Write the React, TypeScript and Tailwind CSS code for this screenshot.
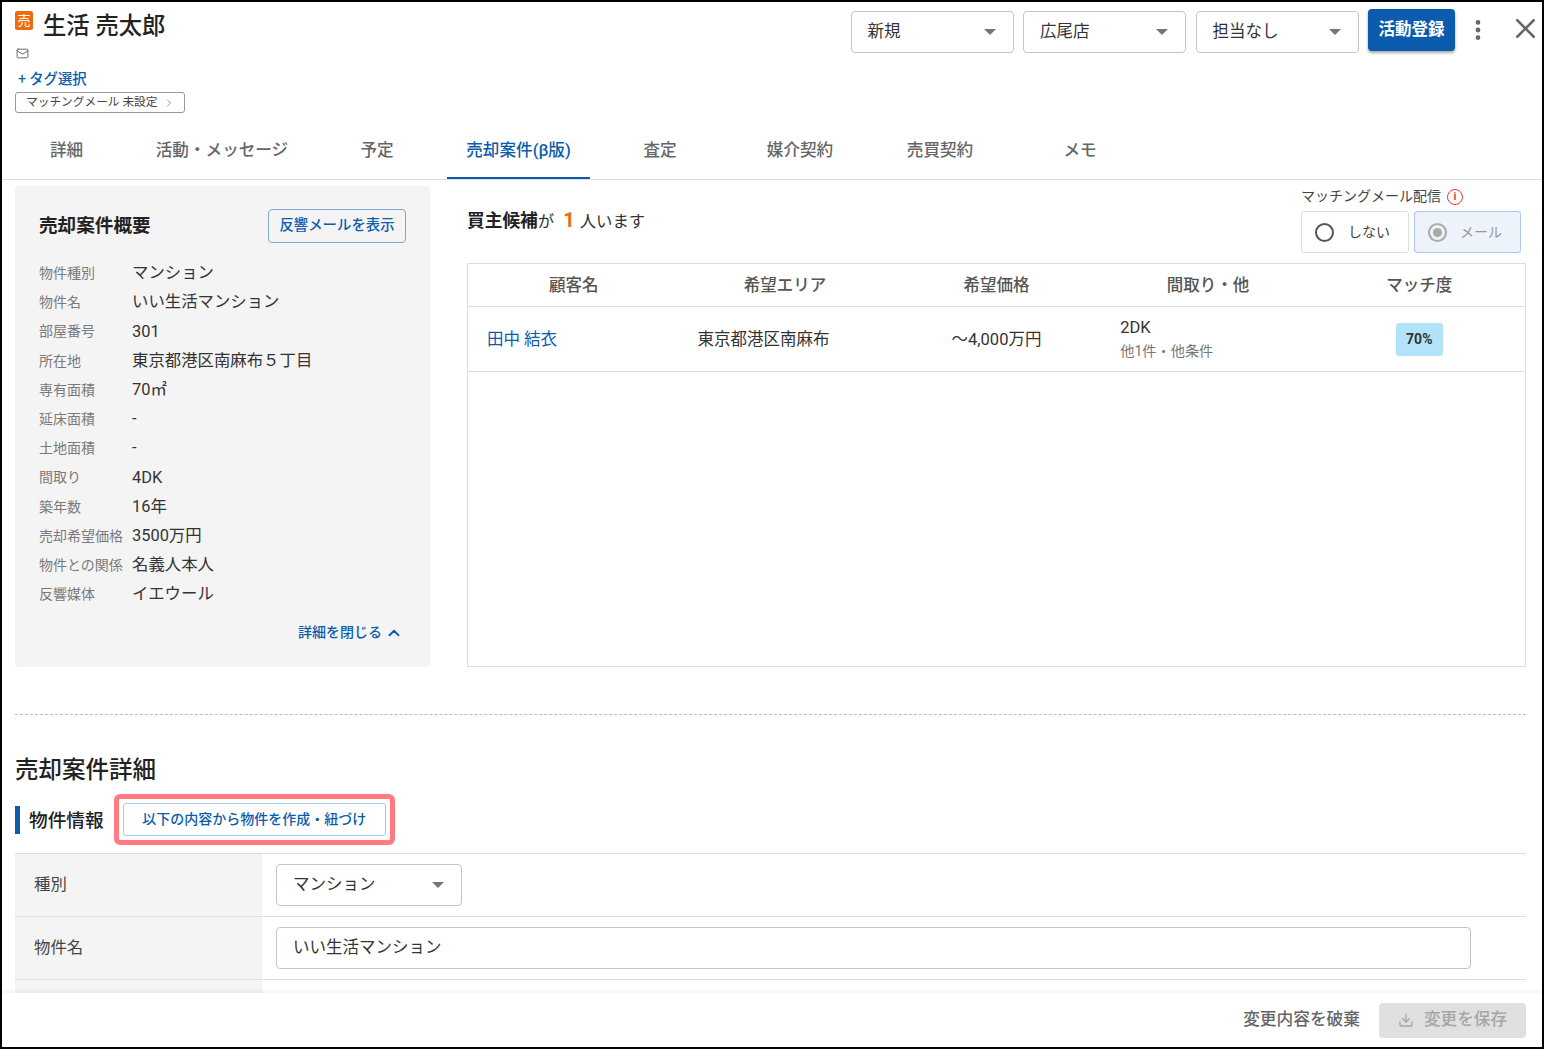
import { ChevronRight, ChevronUp, Download, EllipsisVertical, Mail, X } from "lucide-react";

const summary = [
  ["物件種別", "マンション"],
  ["物件名", "いい生活マンション"],
  ["部屋番号", "301"],
  ["所在地", "東京都港区南麻布５丁目"],
  ["専有面積", "70㎡"],
  ["延床面積", "-"],
  ["土地面積", "-"],
  ["間取り", "4DK"],
  ["築年数", "16年"],
  ["売却希望価格", "3500万円"],
  ["物件との関係", "名義人本人"],
  ["反響媒体", "イエウール"],
];

const tabs = [
  { label: "詳細", className: "w-[104px] pr-[1px]" },
  { label: "活動・メッセージ", className: "w-[206px]" },
  { label: "予定", className: "w-[104px] mr-[18px]" },
  { label: "売却案件(β版)", className: "w-[143px]", active: true },
  { label: "査定", className: "w-[140px]" },
  { label: "媒介契約", className: "w-[140px]" },
  { label: "売買契約", className: "w-[140px]" },
  { label: "メモ", className: "w-[140px]" },
];

function Caret() {
  return <span className="h-0 w-0 border-x-[6px] border-t-[6px] border-x-transparent border-t-[#757575]" />;
}

function SelectBox({ label, className }: { label: string; className: string }) {
  return (
    <div className={`flex h-[42px] items-center justify-between rounded border border-[#c4c4c4] bg-white pl-4 pr-[17px] text-[16.5px] text-[#333] ${className}`}>
      <span>{label}</span>
      <Caret />
    </div>
  );
}

export default function App() {
  return (
    <div
      className="flex h-[1049px] w-[1544px] flex-col overflow-hidden border-2 border-black bg-white text-[#333]"
      style={{ fontFamily: 'Roboto, "Noto Sans CJK JP", sans-serif' }}
    >
      <header className="shrink-0 border-b border-[#ddd]">
        <div className="flex h-[112px] justify-between pl-[13px]">
          <div className="pt-[10px]">
            <div className="flex h-[26px] items-center">
              <span className="-mt-[1px] flex h-[19px] w-[18px] items-center justify-center self-start rounded-[2px] bg-[#ee6c0c] text-[13px] leading-none text-white">売</span>
              <span className="ml-[10px] pt-[3px] text-[23.3px] font-medium leading-none text-[#222]">生活 売太郎</span>
            </div>
            <Mail className="ml-[1px] mt-[9px] h-[13px] w-[13px] text-[#555]" strokeWidth={1.6} />
            <div className="ml-[3px] mt-[11px] flex items-center text-[14.4px] font-medium leading-[18px] text-[#0b5cad]">
              <span className="mr-[3px] font-normal">+</span>タグ選択
            </div>
            <div className="mt-[3px] flex h-[21px] w-[170px] items-center rounded-[3px] border border-[#999] pl-[10px] text-[11.7px] leading-none text-[#444]">
              マッチングメール 未設定
              <ChevronRight className="ml-[6px] h-[12px] w-[12px] text-[#999]" />
            </div>
          </div>
          <div className="flex items-start">
            <div className="flex items-center gap-[9.5px] pt-[9px]">
              <SelectBox label="新規" className="w-[163px]" />
              <SelectBox label="広尾店" className="w-[163px]" />
              <SelectBox label="担当なし" className="w-[163px]" />
            </div>
            <div className="ml-[9.5px] mt-[7px] flex h-[42px] w-[87px] items-center justify-center rounded bg-[#0b5cad] text-[16.5px] font-bold text-white shadow-[0_2px_3px_rgba(0,0,0,0.35)]">
              活動登録
            </div>
            <EllipsisVertical className="ml-[10px] mt-[15px] h-[26px] w-[26px] text-[#666]" strokeWidth={2.4} />
            <X className="ml-[18px] mt-[10px] h-[33px] w-[33px] text-[#666]" strokeWidth={1.8} />
          </div>
        </div>
        <nav className="flex h-[65px] pl-[13px]">
          {tabs.map((tab) => (
            <div
              key={tab.label}
              className={`flex items-center justify-center border-b-2 pt-[12px] text-[16.6px] font-medium ${tab.className} ${
                tab.active ? "border-[#0b5cad] text-[#0b5cad]" : "border-transparent text-[#666]"
              }`}
            >
              {tab.label}
            </div>
          ))}
        </nav>
      </header>

      <main className="min-h-0 flex-1 overflow-hidden pl-[13px] pr-[16px] pt-[6px]">
        <div className="flex items-start">
          <section className="h-[481px] w-[415px] shrink-0 rounded-[4px] bg-[#f4f4f4] px-[24px] pt-[23px]">
            <div className="flex items-center justify-between">
              <h2 className="pt-[2px] text-[18.6px] font-bold text-[#222]">売却案件概要</h2>
              <div className="flex h-[34px] w-[138px] items-center justify-center rounded-[4px] border border-[#7ba7d3] text-[14.4px] font-medium text-[#0b5cad]">
                反響メールを表示
              </div>
            </div>
            <dl className="mt-[16px]">
              {summary.map(([label, value]) => (
                <div key={label} className="flex h-[29.2px] items-center">
                  <dt className="w-[93px] shrink-0 text-[14px] text-[#7a7a7a]">{label}</dt>
                  <dd className="text-[16.4px] text-[#333]">{value}</dd>
                </div>
              ))}
            </dl>
            <div className="mt-[13px] flex items-center justify-end pr-[3px] text-[14px] font-medium text-[#0b5cad]">
              詳細を閉じる
              <ChevronUp className="ml-[3px] h-[18px] w-[18px]" strokeWidth={2.4} />
            </div>
          </section>

          <section className="ml-[37px] min-w-0 flex-1">
            <div className="flex h-[77px] items-start justify-between">
              <p className="pt-[21px] text-[16.4px] leading-[26px] text-[#333]">
                <span className="text-[17.7px] font-bold text-[#222]">買主候補</span>が
                <span className="ml-[9px] mr-[5px] text-[20px] font-bold text-[#ee6c0c]">1</span>人います
              </p>
              <div className="w-[225px] pr-[5px]">
                <div className="flex h-[21px] items-center text-[14px] text-[#444]">
                  マッチングメール配信
                  <span className="ml-[6px] flex h-[16px] w-[16px] items-center justify-center rounded-full border-[1.5px] border-[#e53935] text-[11px] font-bold leading-none text-[#e53935]">i</span>
                </div>
                <div className="mt-[4px] flex gap-[5px]">
                  <div className="flex h-[42px] w-[108px] items-center rounded-[3px] border border-[#ddd] pl-[13px] text-[14px] text-[#444]">
                    <span className="h-[19px] w-[19px] rounded-full border-2 border-[#555]" />
                    <span className="ml-[14px]">しない</span>
                  </div>
                  <div className="flex h-[42px] w-[107px] items-center rounded-[3px] border border-[#a9c6ee] bg-[#eef3fb] pl-[13px] text-[14px] text-[#999]">
                    <span className="flex h-[19px] w-[19px] items-center justify-center rounded-full border-2 border-[#aaa]">
                      <span className="h-[9px] w-[9px] rounded-full bg-[#aaa]" />
                    </span>
                    <span className="ml-[13px]">メール</span>
                  </div>
                </div>
              </div>
            </div>
            <div className="h-[404px] border border-[#ddd]">
              <div className="grid h-[43px] grid-cols-5 items-center border-b border-[#ddd] pt-[3px] text-center text-[16.5px] font-medium text-[#555]">
                <div>顧客名</div>
                <div>希望エリア</div>
                <div>希望価格</div>
                <div>間取り・他</div>
                <div>マッチ度</div>
              </div>
              <div className="grid h-[65px] grid-cols-5 items-center border-b border-[#ddd] text-[16.5px]">
                <div className="pl-[19px] pt-[2px] text-[#0b5cad]">田中 結衣</div>
                <div className="pl-[18px] pt-[2px] text-[#333]">東京都港区南麻布</div>
                <div className="pt-[2px] text-center text-[#333]">～4,000万円</div>
                <div className="pl-[18px]">
                  <div className="leading-[22px] text-[#333]">2DK</div>
                  <div className="mt-[2px] text-[14.2px] leading-[20px] text-[#777]">他1件・他条件</div>
                </div>
                <div className="flex justify-center">
                  <span className="flex h-[33px] w-[47px] items-center justify-center rounded-[3px] bg-[#b3e3fb] text-[14px] font-bold text-[#333]">70%</span>
                </div>
              </div>
            </div>
          </section>
        </div>

        <div className="mt-[47px] border-t border-dashed border-[#bbb]" />
        <h2 className="mt-[38px] text-[23.5px] font-medium leading-[34px] text-[#222]">売却案件詳細</h2>
        <div className="mt-[7px] flex items-center">
          <h3 className="h-[28px] border-l-[5px] border-[#0b5cad] pl-[9px] text-[18.7px] font-medium leading-[31px] text-[#222]">物件情報</h3>
          <div className="ml-[10px] rounded-[6px] border-[5px] border-[#ff7b80] p-[4px]">
            <div className="flex h-[33px] w-[263px] items-center justify-center rounded-[3px] border border-[#a9c6ee] text-[14px] font-medium text-[#0b5cad]">
              以下の内容から物件を作成・紐づけ
            </div>
          </div>
        </div>
        <div className="mt-[8px] border-t border-[#ddd]">
          <div className="flex h-[63px] border-b border-[#ddd]">
            <div className="flex w-[247px] items-center bg-[#f4f4f4] pl-[19px] text-[16.4px] text-[#444]">種別</div>
            <div className="flex items-center pl-[14px]">
              <SelectBox label="マンション" className="w-[186px]" />
            </div>
          </div>
          <div className="flex h-[63px] border-b border-[#ddd]">
            <div className="flex w-[247px] items-center bg-[#f4f4f4] pl-[19px] text-[16.4px] text-[#444]">物件名</div>
            <div className="flex items-center pl-[14px]">
              <div className="flex h-[42px] w-[1195px] items-center rounded border border-[#c4c4c4] pl-4 text-[16.5px] text-[#333]">いい生活マンション</div>
            </div>
          </div>
          <div className="flex h-[30px]">
            <div className="w-[247px] bg-[#f4f4f4]" />
          </div>
        </div>
      </main>

      <footer className="relative flex h-[54px] shrink-0 items-center justify-end gap-[19px] bg-white pr-[16px] shadow-[0_-2px_4px_rgba(0,0,0,0.06)]">
        <span className="text-[16.7px] font-medium text-[#666]">変更内容を破棄</span>
        <div className="flex h-[35px] w-[147px] items-center justify-center rounded-[4px] bg-[#e0e0e0] text-[16.6px] font-medium text-[#a6a6a6]">
          <Download className="mr-[10px] h-[16px] w-[16px]" strokeWidth={2} />
          変更を保存
        </div>
      </footer>
    </div>
  );
}
